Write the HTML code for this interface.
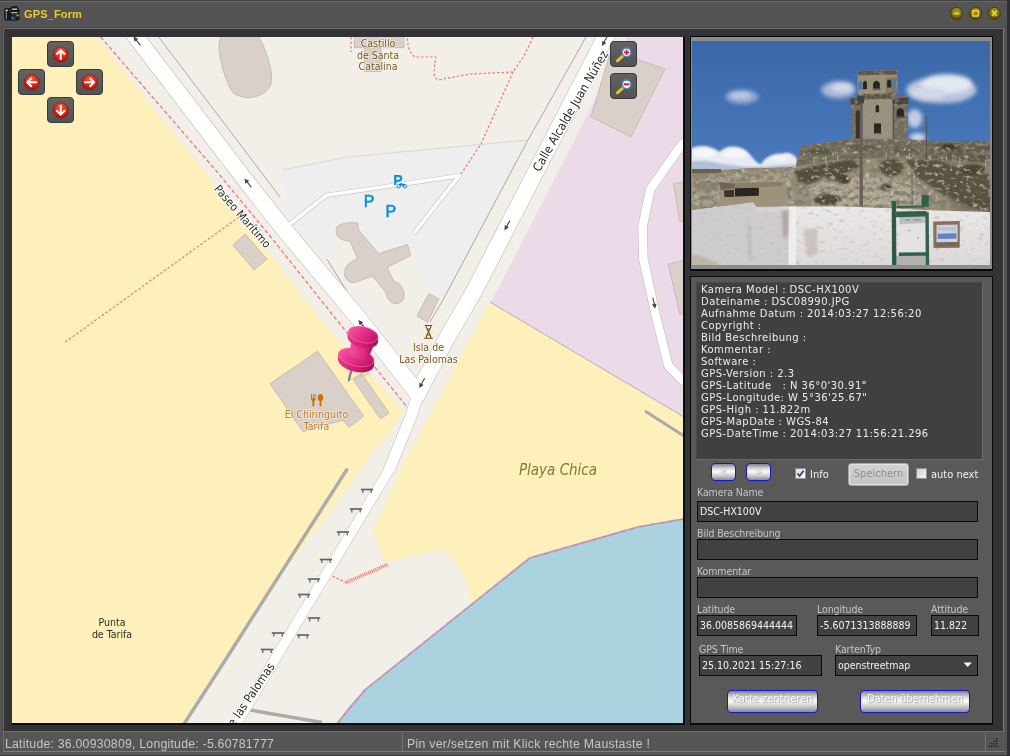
<!DOCTYPE html>
<html lang="de">
<head>
<meta charset="utf-8">
<title>GPS_Form</title>
<style>
html,body{margin:0;padding:0;}
body{width:1010px;height:756px;overflow:hidden;background:#545454;position:relative;
 font-family:"Liberation Sans","DejaVu Sans",sans-serif;font-size:11px;color:#e6e6e6;}
.abs{position:absolute;}
.lbl,.inp,.bbtn,.wt,#info,#title,#st1,#st2,#spbtn,#map{will-change:transform;}
#win{position:absolute;left:0;top:0;width:1010px;height:756px;overflow:hidden;background:#545454;}
#title{position:absolute;left:24.3px;top:7px;font-weight:bold;font-size:11px;color:#e9c93f;letter-spacing:0.15px;line-height:14px;white-space:nowrap;text-shadow:0 0 1px #6b5a10;}
#frame{position:absolute;left:3px;top:28px;width:999px;height:702px;background:#333335;
 border-top:1px solid #6e6e6e;border-left:1px solid #6a6a6a;border-right:1px solid #7a7a7a;border-bottom:1px solid #707070;box-sizing:content-box;}
#mapbox{position:absolute;left:12px;top:37px;width:671px;height:686px;overflow:hidden;background:#f2efe9;}
#mapshadow{position:absolute;left:12px;top:37px;width:673px;height:688px;background:#0c0c0c;}
.lbl{position:absolute;color:#c4c4c4;font-family:"DejaVu Sans Condensed","Liberation Sans",sans-serif;font-size:10.5px;line-height:13px;white-space:nowrap;letter-spacing:-0.1px;}
.inp{position:absolute;box-sizing:border-box;border:1px solid #0a0a0a;background:#414141;color:#f2f2f2;font-family:"DejaVu Sans Condensed","Liberation Sans",sans-serif;font-size:10.5px;line-height:18px;height:21px;padding-left:2px;white-space:nowrap;overflow:hidden;}
.bbtn{position:absolute;box-sizing:border-box;border:1.5px solid #1616c8;border-radius:4px;
 background:linear-gradient(#80808e 0%,#dedede 30%,#fcfcfc 48%,#cbcbcb 74%,#8a8a8a 100%);color:#fff;text-align:center;font-family:"DejaVu Sans Condensed","Liberation Sans",sans-serif;white-space:nowrap;overflow:hidden;
 text-shadow:0 0 2px #9a9a9a,1px 1px 1px #b0b0b0;}
#status{position:absolute;left:3px;top:732px;width:1001px;height:19px;background:#565656;border-bottom:1px solid #7c7c7c;border-left:1px solid #6a6a6a;color:#c6c6c6;font-size:12.3px;line-height:17px;white-space:nowrap;}
</style>
</head>
<body>
<div id="win">
 <!-- title bar -->
 <svg class="abs" style="left:2px;top:2px" width="24" height="22" viewBox="2 2 24 22">
  <defs><filter id="ib" x="-10%" y="-10%" width="120%" height="120%"><feGaussianBlur stdDeviation="0.35"/></filter></defs>
  <g filter="url(#ib)">
  <path d="M4.200 9.200 Q4.200 8.300 5.200 8.300 L10.500 8.300 L11.300 6.600 Q11.600 6.200 12.200 6.200 L16.600 6.200 Q17.300 6.200 17.600 6.800 L18.300 8.400 Q19.500 8.600 19.500 9.800 L19.500 18.600 Q19.500 20.400 17.800 20.400 L6 20.400 Q4.200 20.400 4.200 18.600 Z" fill="#151515"/>
  <rect x="5.700" y="10" width="1.300" height="9" fill="#7d7d7d"/>
  <rect x="5.500" y="9.700" width="2.500" height="1.100" fill="#e8e8e8"/>
  <rect x="9" y="9.900" width="1.800" height="0.900" fill="#5a5a5a"/>
  <rect x="11.900" y="8.500" width="5.200" height="1.300" fill="#d8d2d2"/>
  <rect x="11" y="12" width="6.700" height="1.200" fill="#a8a8ae"/>
  <rect x="11.500" y="13.600" width="4.500" height="0.700" fill="#5d5d5d"/>
  <circle cx="13.600" cy="17.500" r="3" fill="#12354c"/>
  <ellipse cx="12.800" cy="18.100" rx="1.100" ry="0.700" fill="#7aa6c2" transform="rotate(25 12.800 18.100)"/>
  <path d="M15.800 14.600 L19.200 14.400 L19.200 16.300 L16.800 16.600 Z" fill="#c58a2a"/>
  </g>
 </svg>
 <div id="title">GPS_Form</div>
 <svg class="abs" style="left:946px;top:5px" width="58" height="18" viewBox="946 5 58 18">
  <defs>
   <radialGradient id="yb" cx="0.5" cy="0.35" r="0.65">
    <stop offset="0" stop-color="#a89a1c"/><stop offset="0.6" stop-color="#83760f"/><stop offset="1" stop-color="#4a4206"/>
   </radialGradient>
  </defs>
  <g stroke="#3a3405" stroke-width="0.8" fill="url(#yb)">
   <circle cx="956.5" cy="13.3" r="6"/><circle cx="975.6" cy="13.3" r="6"/><circle cx="994.4" cy="13.3" r="6"/>
  </g>
  <rect x="953.6" y="12.6" width="5.8" height="1.8" fill="#ecd838"/>
  <rect x="972.9" y="10.6" width="5.4" height="5.4" fill="none" stroke="#ecd838" stroke-width="1.4"/>
  <path d="M992.2 10.9 L996.6 15.7 M996.6 10.9 L992.2 15.7" stroke="#ecd838" stroke-width="1.7" fill="none"/>
 </svg>

 <div id="frame"></div>
 <div id="mapshadow"></div>
 <div id="mapbox">
  <svg id="map" class="abs" style="left:-12px;top:-37px" width="1010" height="756" viewBox="0 0 1010 756">
  <defs>
 <radialGradient id="redb" cx="0.5" cy="0.3" r="0.75">
  <stop offset="0" stop-color="#ff5a3a"/><stop offset="0.55" stop-color="#e32210"/><stop offset="1" stop-color="#a80e04"/>
 </radialGradient>
 <linearGradient id="btnbg" x1="0" y1="0" x2="0" y2="1">
  <stop offset="0" stop-color="#636363"/><stop offset="1" stop-color="#525252"/>
 </linearGradient>
 <linearGradient id="pinA" x1="0" y1="0" x2="1" y2="0.3">
  <stop offset="0" stop-color="#f45fa4"/><stop offset="0.55" stop-color="#e8318a"/><stop offset="1" stop-color="#c0176a"/>
 </linearGradient>
 <linearGradient id="pinRim" x1="0" y1="0" x2="1" y2="0">
  <stop offset="0" stop-color="#e63c8b"/><stop offset="0.5" stop-color="#d61f74"/><stop offset="1" stop-color="#a50d55"/>
 </linearGradient>
 <linearGradient id="pinB" x1="0" y1="0" x2="1" y2="0">
  <stop offset="0" stop-color="#f0509a"/><stop offset="0.6" stop-color="#e12a82"/><stop offset="1" stop-color="#a80f58"/>
 </linearGradient>
 <g id="bench">
  <path d="M-6.200 0 H6.200" stroke="#666666" stroke-width="1.700" fill="none"/><path d="M-4.200 0.500 V3.600 M4.200 0.500 V3.600" stroke="#666666" stroke-width="1.300" fill="none"/>
 </g>
 <g id="arrow">
  <path d="M5.500 0 L-2 0" stroke="#454545" stroke-width="1.100" fill="none"/><path d="M-5.800 0 L-1 -2.400 L-1 2.400 Z" fill="#454545"/>
 </g>
</defs>
<rect x="0" y="0" width="1010" height="756" fill="#f2efe9"/>

<!-- beaches -->
<path d="M12 37 L97 37 L270 254 L320 319 L400 407 L401.500 414 L386 437.500 L373.500 450 L358.900 472.500 L274.600 584.800 L257 610 L226 659 L184 724 L12 724 Z" fill="#fef0ba"/>
<path d="M490 302 L684 417 L684 519 L638 527 L530 558 L471 605 L470 598 L466 579 L455 562 L443 550 L385 562 L379 546 L373 530 L400 470 L444 388 Z" fill="#fef0ba"/>
<!-- industrial -->
<path d="M627 37 L684 37 L684 417 L490 302 L498 289 Z" fill="#ebdbe8"/>
<path d="M490 302 L684 417" stroke="#b5a4b2" stroke-width="0.9" fill="none"/>
<!-- water -->
<path d="M684 519 L638 527 L530 558 L471 605 L365 690 L348 710 L337 724 L684 724 Z" fill="#aad3df"/>
<path d="M684 519 L638 527 L530 558 L471 605 L365 690 L348 710 L337 724" stroke="#c9a3c3" stroke-width="2.200" fill="none"/>
<path d="M684 519 L638 527 L530 558 L471 605 L365 690 L348 710 L337 724" stroke="#9b8ba3" stroke-width="0.800" stroke-dasharray="5 2 1 2" fill="none"/>

<!-- parking -->
<path d="M282 170 L348 157 L528 140 L443 300 L430 294 L411 250 L380 250 L358 225 L337 226 L336 240 L327 259 L293 224 Z" fill="#eeeeee"/>
<path d="M282 170 L348 157 L528 140" stroke="#d3d0ca" stroke-width="0.8" fill="none"/>

<!-- buildings -->
<g fill="#d9d0c9" stroke="#c1b4a8" stroke-width="0.800">
 <path d="M221.400 36 L258.500 36 C264 45 270 62 271.400 72.700 C272 80 271 86 269 88.200 C263 95 254 98 247.600 97.700 C241 97 235 95 232.100 91.800 C226 82 220 62 219 48.900 C218.500 44 219.500 39 221.400 36 Z"/>
 <path d="M354.500 36 H404 V47.700 H354.500 Z"/>
 <path d="M364.300 47.700 H381 V71.500 H364.300 Z"/>
 <path d="M611 50 L665 69 L631 137 L591 117 Z"/>
 <path d="M673.600 183.600 L684 181.600 L684 221 L679.700 221 Z"/>
 <path d="M668.300 264 L684 260.400 L684 314 L679.700 314 Z"/>
 <path d="M245 234 L267 259 L254 270 L233 245 Z"/>
 <path d="M337 227 C339 223 352 222 357.500 223 L358.700 230 L378.700 253.700 L407.500 244.500 L410.700 255.500 L387 267.500 L393.700 281 C398 283 401 284 402 288 C405 292 404.500 296 403.700 298.700 C402 302 399 304 396 303.500 C393 303.500 391 302.500 390 301 C387 298 386.500 295 386 292.500 L372.500 276 L355 282.500 C351 283 349 282 347.500 280 C344 277 344 273 345 270 C346 266 348 264 350 262.500 L357.500 258.700 L350 241 C346 241 341 240 338.700 237.500 C336 234 335.500 230 337 227 Z"/>
 <path d="M428.700 293.700 L439 298.700 L427.500 322.500 L417 316 Z"/>
 <path d="M270 383.700 L317.500 351.200 L363.700 416.200 L348.700 427.500 L343 420 L303 431.700 Z"/>
 <path d="M353 379.500 L361.700 373.700 L389 413 L380.500 419 Z"/>
</g>

<!-- thin lines (walls / barriers) -->
<g stroke="#8d8b86" stroke-width="0.7" fill="none">
 <path d="M158.700 37 L280 197"/>
 <path d="M327 259 L349 295 L362 314"/>
 <path d="M586 37 L528 140 L443 300 L430 322"/>
</g>
<!-- gray thick walls -->
<g stroke="#ababab" stroke-width="3" fill="none" stroke-linecap="butt">
 <path d="M347.500 468.500 L226 659 L184 724" stroke-width="3.400"/>
 <path d="M645 411 L684 436"/>
 <path d="M247.600 709.600 L322 722.500" stroke-width="3.400"/>
</g>

<!-- road casings -->
<g stroke="#c9c5bd" fill="none" stroke-linejoin="round" stroke-linecap="round">
 <path d="M130.700 30 L136 37 L247.500 183 L284.600 230 L360 320 L418 394" stroke-width="17.400"/>
 <path d="M609 30 L475.300 289 L445.800 340 L418 393" stroke-width="17.400"/>
 <path d="M418 393 L411.500 415 L389 470" stroke-width="12.400"/><path d="M389 470 L275 659 L230 735" stroke-width="10.800"/>
 <path d="M290.500 223.500 L326.500 195.300 L459 175.800 L415 232" stroke-width="4.800"/>
 <path d="M690 137 L680.800 146 L650.400 189 L642.600 226.400 L643.300 258.600 L655.800 315.700 L668.300 365.700 L682.600 380 L692 388" stroke-width="9.800"/>
</g>
<!-- road fills -->
<g stroke="#ffffff" fill="none" stroke-linejoin="round" stroke-linecap="round">
 <path d="M130.700 30 L136 37 L247.500 183 L284.600 230 L360 320 L418 394" stroke-width="16"/>
 <path d="M609 30 L475.300 289 L445.800 340 L418 393" stroke-width="16"/>
 <path d="M418 393 L411.500 415 L389 470" stroke-width="11.200"/><path d="M389 470 L275 659 L230 735" stroke-width="9.600"/>
 <path d="M290.500 223.500 L326.500 195.300 L459 175.800 L415 232" stroke-width="3.600"/>
 <path d="M690 137 L680.800 146 L650.400 189 L642.600 226.400 L643.300 258.600 L655.800 315.700 L668.300 365.700 L682.600 380 L692 388" stroke-width="8.400"/>
</g>

<!-- footways (red dashed) -->
<g stroke="#ef747a" stroke-width="1.300" fill="none" stroke-dasharray="4 2.500">
 <path d="M100.700 37 L215.500 170 L270 236 L336.700 320 L407.500 407.500"/>
</g>
<g stroke="#ef747a" stroke-width="1.200" fill="none" stroke-dasharray="2.500 2">
 <path d="M239 217 L64 343"/>
 <path d="M533 37 L524 56 L513 72 L481 144 L461 174"/>
 <path d="M513 72 L470 74 L438 80 C432 77 434 70 436 57 L415 57 C408 52 408 44 407 37"/>
 <path d="M351 37 L351 52"/>
 <path d="M332.500 576 L346 582.500"/>
</g>
<path d="M346 582.500 L387.500 564.500" stroke="#f57f73" stroke-width="3.600" stroke-dasharray="1.100 0.900" fill="none"/>

<!-- benches -->
<g>
 <use href="#bench" x="367" y="489.500"/><use href="#bench" x="356" y="509"/><use href="#bench" x="343" y="532"/>
 <use href="#bench" x="326" y="559.500"/><use href="#bench" x="314" y="579"/><use href="#bench" x="304" y="594.500"/>
 <use href="#bench" x="314" y="618"/><use href="#bench" x="278" y="633"/><use href="#bench" x="303" y="635"/><use href="#bench" x="267" y="649.500"/>
</g>

<!-- oneway arrows -->
<use href="#arrow" transform="translate(137,41) rotate(52)"/>
<use href="#arrow" transform="translate(248,183) rotate(52)"/>
<use href="#arrow" transform="translate(362,324.500) rotate(52)"/>
<use href="#arrow" transform="translate(604.700,41) rotate(-62)"/>
<use href="#arrow" transform="translate(507.300,225.300) rotate(-62)"/>
<use href="#arrow" transform="translate(422,383) rotate(-62)"/>
<use href="#arrow" transform="translate(654,303) rotate(-102)"/>

<!-- labels -->
<g font-family="'DejaVu Sans Condensed','DejaVu Sans','Liberation Sans',sans-serif" text-anchor="middle">
 <g font-size="10.500" fill="#7a551a" stroke="#ffffff" stroke-opacity="0.6" stroke-width="1.500" paint-order="stroke" style="paint-order:stroke">
  <text x="378" y="47">Castillo</text><text x="378" y="58.500">de Santa</text><text x="378" y="70">Catalina</text>
  <text x="428.500" y="350.500">Isla de</text><text x="428.500" y="362.500">Las Palomas</text>
 </g>
 <g font-size="10.500" fill="#c07a1e" stroke="#ffffff" stroke-opacity="0.6" stroke-width="1.300" style="paint-order:stroke">
  <text x="316.500" y="418">El Chiringuito</text><text x="316.500" y="430">Tarifa</text>
 </g>
 <g font-size="10.500" fill="#2c2c2c">
  <text x="112" y="625.500">Punta</text><text x="112" y="637.500">de Tarifa</text>
 </g>
 <text x="558" y="475" font-size="15" font-style="italic" fill="#85763a" font-family="'DejaVu Sans Condensed','DejaVu Sans',sans-serif">Playa Chica</text>
 <g font-size="12" fill="#2a2a2a" stroke="#ffffff" stroke-width="2" style="paint-order:stroke">
  <text transform="translate(242.600,216.400) rotate(49)" x="0" y="4" font-size="11.500">Paseo Marítimo</text>
  <text transform="translate(570.600,111) rotate(-59.800)" x="0" y="4" font-size="12.300">Calle Alcalde Juan Núñez</text>
  <text transform="translate(245.500,703) rotate(-56)" x="0" y="4">Calle las Palomas</text>
 </g>
 <g font-family="'Liberation Sans','DejaVu Sans',sans-serif" font-size="16" fill="#0a8fd6" stroke="#0a8fd6" stroke-width="0.500" text-anchor="start">
  <text x="393.300" y="184.800" font-size="14" font-weight="bold" stroke-width="0.200">P</text><text x="363.800" y="206.700">P</text><text x="385.600" y="216.600">P</text>
 </g>
</g>
<!-- motorcycle parking mark -->
<g stroke="#0a7fc6" stroke-width="0.900" fill="none"><circle cx="398.700" cy="186.300" r="1.700"/><circle cx="404.900" cy="186.300" r="1.700"/><path d="M399 184.600 L405 184.600 M400.500 183.300 L403.500 185.500" stroke-width="1.600"/></g>
<!-- restaurant icon -->
<g fill="#c77400">
 <path d="M312 394 v4.500 h0.900 v-4.500 h0.900 v4.500 h0.900 v-4.500 h0.900 v5.200 c0 1 -0.800 1.500 -1.300 1.700 v5.400 h-1.900 v-5.400 c-0.500 -0.200 -1.300 -0.700 -1.300 -1.700 v-5.200 z"/>
 <path d="M320.500 394 c1.800 0 2.800 1.800 2.800 3.800 c0 1.900 -0.900 3 -1.900 3.300 v5.200 h-1.800 v-5.200 c-1 -0.300 -1.900 -1.400 -1.900 -3.300 c0 -2 1 -3.800 2.800 -3.800 z"/>
</g>
<!-- monument icon -->
<g stroke="#734a08" stroke-width="1.100" fill="none">
 <path d="M424.800 325.500 H432.200 M424.200 338.200 H432.800 M426 326 C426.500 330 430.500 333.500 431 338 M431 326 C430.500 330 426.500 333.500 426 338 M426.500 329 H430.500 M426.500 335 H430.500"/>
</g>

<!-- map nav buttons -->
<g>
 <g stroke="#3a3a3a" stroke-width="1" fill="url(#btnbg)">
  <rect x="47.500" y="41.500" width="26" height="25" rx="3.500"/>
  <rect x="18.500" y="69.500" width="26" height="25" rx="3.500"/>
  <rect x="76.500" y="69.500" width="26" height="25" rx="3.500"/>
  <rect x="47.500" y="97.500" width="26" height="25" rx="3.500"/>
  <rect x="610.500" y="41.500" width="26" height="25" rx="3.500"/>
  <rect x="610.500" y="73.500" width="26" height="25" rx="3.500"/>
 </g>
 <g fill="url(#redb)" stroke="#8a1206" stroke-width="0.600">
  <circle cx="60.700" cy="54.500" r="7.600"/><circle cx="31.700" cy="82.300" r="7.600"/><circle cx="89.700" cy="82.300" r="7.600"/><circle cx="60.700" cy="110.300" r="7.600"/>
 </g>
 <g stroke="#ffffff" stroke-width="2" fill="none" stroke-linecap="square" stroke-linejoin="miter">
  <path d="M60.700 59 V50.500 M57 53.800 L60.700 50.200 L64.400 53.800"/>
  <path d="M36.200 82.300 H27.700 M31 78.600 L27.400 82.300 L31 86"/>
  <path d="M85.200 82.300 H93.700 M90.400 78.600 L94 82.300 L90.400 86"/>
  <path d="M60.700 105.800 V114.300 M57 111 L60.700 114.600 L64.400 111"/>
 </g>
 <!-- magnifiers -->
 <g>
  <path d="M622.300 56.400 L617.300 60.900" stroke="#f2bd2c" stroke-width="2.800" stroke-linecap="round"/>
  <circle cx="626.600" cy="52.300" r="4.300" fill="#f4f8ff" stroke="#4c8ed0" stroke-width="1.300"/>
  <path d="M624 52.300 H629.200 M626.600 49.700 V54.900" stroke="#d8201a" stroke-width="1.800"/>
  <path d="M622.300 88.400 L617.300 92.900" stroke="#f2bd2c" stroke-width="2.800" stroke-linecap="round"/>
  <circle cx="626.600" cy="84.300" r="4.300" fill="#f4f8ff" stroke="#4c8ed0" stroke-width="1.300"/>
  <path d="M623.800 84.300 H629.400" stroke="#d8201a" stroke-width="2"/>
 </g>
</g>

<!-- pin -->
<g>
 <path d="M351.300 370 L348.900 380.200" stroke="#76858a" stroke-width="2.300" stroke-linecap="round"/>
 <path d="M350.500 379.500 L362 371.500 L372 374 Z" fill="#c9c2ad" opacity="0.500"/>
 <!-- base -->
 <ellipse cx="356" cy="362" rx="18.400" ry="9.800" transform="rotate(13 356 362)" fill="url(#pinRim)"/>
 <path d="M338.100 353.500 L338 358.500 L374 366.500 L374.200 361.500 Z" fill="url(#pinRim)"/>
 <ellipse cx="356.200" cy="357.400" rx="18.400" ry="9" transform="rotate(13 356.200 357.400)" fill="url(#pinA)"/>
 <ellipse cx="356.200" cy="357.400" rx="18" ry="8.600" transform="rotate(13 356.200 357.400)" fill="none" stroke="#ff86bd" stroke-width="0.700" opacity="0.700"/>
 <!-- neck -->
 <path d="M351 342.500 L349.300 354 C353 359 364 361 368.500 358 L373.800 345 Z" fill="url(#pinB)"/>
 <!-- head -->
 <ellipse cx="362.800" cy="339" rx="15.500" ry="8.600" transform="rotate(13 362.800 339)" fill="url(#pinRim)"/>
 <path d="M347.700 331.500 L347.600 335.500 L378 342.500 L378.100 338.400 Z" fill="url(#pinRim)"/>
 <ellipse cx="363.100" cy="334.800" rx="15.500" ry="8.300" transform="rotate(13 363.100 334.800)" fill="url(#pinA)"/>
 <ellipse cx="363.100" cy="334.800" rx="15.100" ry="7.900" transform="rotate(13 363.100 334.800)" fill="none" stroke="#ff86bd" stroke-width="0.700" opacity="0.600"/>
</g>

  </svg>
 </div>

 <!-- photo panel -->
 <div class="abs" style="left:690px;top:36px;width:303px;height:235px;background:#0a0a0a;"></div>
 <div class="abs" style="left:691px;top:37px;width:301px;height:232px;background:#8c8c8c;"></div>
 <div class="abs" style="left:692px;top:41px;width:298px;height:224px;overflow:hidden;background:#4a78b8;">
  <svg id="photo" class="abs" style="left:-4px;top:-7px" width="306" height="238" viewBox="0 0 972 756" preserveAspectRatio="none">
  <defs>
 <linearGradient id="sky" x1="0" y1="0" x2="0" y2="1">
  <stop offset="0" stop-color="#3a66a6"/><stop offset="0.5" stop-color="#4878bb"/><stop offset="1" stop-color="#6294d4"/>
 </linearGradient>
 <linearGradient id="wallg" x1="0" y1="0" x2="0" y2="1">
  <stop offset="0" stop-color="#ebe8e8"/><stop offset="1" stop-color="#dcd8d8"/>
 </linearGradient>
 <filter id="blur6" x="-20%" y="-20%" width="140%" height="140%"><feGaussianBlur stdDeviation="6"/></filter>
 <filter id="blur4" x="-20%" y="-20%" width="140%" height="140%"><feGaussianBlur stdDeviation="4"/></filter>
 <filter id="blur2" x="-20%" y="-20%" width="140%" height="140%"><feGaussianBlur stdDeviation="2"/></filter>
 <filter id="blur1" x="-10%" y="-10%" width="120%" height="120%"><feGaussianBlur stdDeviation="1.2"/></filter>
 <filter id="blur10" x="-20%" y="-20%" width="140%" height="140%"><feGaussianBlur stdDeviation="9"/></filter>
 <filter id="speck" x="0" y="0" width="100%" height="100%">
  <feTurbulence type="fractalNoise" baseFrequency="0.055 0.07" numOctaves="3" seed="11" result="n"/>
  <feColorMatrix in="n" type="matrix" values="0 0 0 0 0.22  0 0 0 0 0.20  0 0 0 0 0.15  3.2 0 0 0 -1.30" result="d"/>
  <feComposite in="d" in2="SourceGraphic" operator="in" result="dd"/>
  <feColorMatrix in="n" type="matrix" values="0 0 0 0 0.72  0 0 0 0 0.69  0 0 0 0 0.60  0 2.4 0 0 -1.48" result="l"/>
  <feComposite in="l" in2="SourceGraphic" operator="in" result="ll"/>
  <feMerge><feMergeNode in="SourceGraphic"/><feMergeNode in="dd"/><feMergeNode in="ll"/></feMerge>
 </filter>
 <filter id="dspeck" x="0" y="0" width="100%" height="100%">
  <feTurbulence type="fractalNoise" baseFrequency="0.06 0.08" numOctaves="3" seed="23" result="n"/>
  <feColorMatrix in="n" type="matrix" values="0 0 0 0 0.64  0 0 0 0 0.60  0 0 0 0 0.50  0 2.6 0 0 -1.45" result="l"/>
  <feComposite in="l" in2="SourceGraphic" operator="in" result="ll"/>
  <feMerge><feMergeNode in="SourceGraphic"/><feMergeNode in="ll"/></feMerge>
 </filter>
 <filter id="wspeck" x="0" y="0" width="100%" height="100%">
  <feTurbulence type="fractalNoise" baseFrequency="0.05 0.09" numOctaves="3" seed="3" result="n"/>
  <feColorMatrix in="n" type="matrix" values="0 0 0 0 0.55  0 0 0 0 0.52  0 0 0 0 0.5  3.0 0 0 0 -1.75" result="d"/>
  <feComposite in="d" in2="SourceGraphic" operator="in" result="dd"/>
  <feMerge><feMergeNode in="SourceGraphic"/><feMergeNode in="dd"/></feMerge>
 </filter>
 <filter id="tspeck" x="0" y="0" width="100%" height="100%">
  <feTurbulence type="fractalNoise" baseFrequency="0.07 0.06" numOctaves="2" seed="5" result="n"/>
  <feColorMatrix in="n" type="matrix" values="0 0 0 0 0.3  0 0 0 0 0.27  0 0 0 0 0.22  2.6 0 0 0 -1.25" result="d"/>
  <feComposite in="d" in2="SourceGraphic" operator="in" result="dd"/>
  <feMerge><feMergeNode in="SourceGraphic"/><feMergeNode in="dd"/></feMerge>
 </filter>
</defs>
<rect x="0" y="0" width="972" height="756" fill="url(#sky)"/>
<!-- clouds -->
<g filter="url(#blur6)">
 <ellipse cx="172" cy="200" rx="52" ry="22" fill="#8fa7d0"/>
 <ellipse cx="166" cy="194" rx="36" ry="13" fill="#b9c7e0"/>
 <ellipse cx="478" cy="178" rx="54" ry="27" fill="#a9b9d8"/>
 <ellipse cx="490" cy="168" rx="36" ry="17" fill="#d2d9e9"/>
 <ellipse cx="805" cy="178" rx="112" ry="42" fill="#bac5dc"/>
 <ellipse cx="822" cy="158" rx="82" ry="30" fill="#e3e7f0"/>
 <ellipse cx="760" cy="190" rx="58" ry="22" fill="#d0d7e7"/>
 <ellipse cx="720" cy="268" rx="24" ry="30" fill="#c3cde1"/>
 <ellipse cx="730" cy="328" rx="26" ry="13" fill="#d2d9e9"/>
</g>
<g filter="url(#blur4)">
 <path d="M0 440 L0 368 C30 350 70 352 100 374 C125 350 172 350 198 384 C212 402 222 412 232 414 C244 392 272 378 298 380 C322 372 340 384 346 398 L350 440 Z" fill="#e6eaf2"/>
 <path d="M0 440 L0 408 C40 396 80 408 120 414 C160 420 200 424 240 422 C280 416 320 412 350 416 L350 440 Z" fill="#b4c0d6"/>
 <ellipse cx="150" cy="380" rx="40" ry="15" fill="#f5f6f9"/>
 <ellipse cx="52" cy="378" rx="36" ry="15" fill="#f5f6f9"/>
 <ellipse cx="290" cy="394" rx="30" ry="10" fill="#f0f2f7"/>
</g>

<!-- hill -->
<g filter="url(#speck)">
 <path d="M0 432 L60 428 L110 432 L200 426 L300 424 L343 421 L350 386 L360 357 L400 350 L441 344 L489 337 L520 335 L700 335 L760 339 L800 342 L860 340 L972 340 L972 580 L0 580 Z" fill="#978e78"/>
 <path d="M343 421 L350 386 L360 357 L400 350 L441 344 L489 337 L520 335 L700 335 L760 339 L800 342 L860 340 L972 340 L972 410 L860 402 L760 396 L600 394 L480 398 L400 410 Z" fill="#6f6755"/>
 <g filter="url(#blur6)">
  <path d="M10 450 L330 436 L340 545 L10 550 Z" fill="#a59d88"/>
  <path d="M395 472 L560 448 L700 464 L760 545 L560 552 L395 548 Z" fill="#b0a893"/>
  <path d="M760 352 L972 346 L972 410 L800 402 Z" fill="#5f5847"/>
  <path d="M820 520 L972 500 L972 575 L860 570 Z" fill="#7a735f"/>
  <ellipse cx="60" cy="480" rx="40" ry="20" fill="#8c8470"/>
 </g>
</g>
<g filter="url(#dspeck)">
 <g filter="url(#blur4)" opacity="0.920">
  <path d="M336 436 L420 414 L524 398 L548 420 L504 440 L474 470 L432 452 L384 480 L350 466 Z" fill="#4d4937"/>
  <ellipse cx="497" cy="462" rx="19" ry="16" fill="#423e2f"/>
  <ellipse cx="646" cy="424" rx="38" ry="28" fill="#514c39"/>
  <ellipse cx="630" cy="486" rx="17" ry="12" fill="#474333"/>
  <path d="M690 398 L790 400 L880 430 L972 450 L972 566 L900 552 L810 510 L730 456 Z" fill="#544f3b"/>
  <ellipse cx="442" cy="526" rx="42" ry="18" fill="#484434"/>
  <ellipse cx="905" cy="430" rx="40" ry="17" fill="#454131"/>
  <ellipse cx="832" cy="358" rx="30" ry="10" fill="#3b372a"/>
  <ellipse cx="420" cy="372" rx="40" ry="10" fill="#5a5343"/>
  <ellipse cx="560" cy="360" rx="60" ry="8" fill="#5e5747"/>
  <ellipse cx="690" cy="368" rx="40" ry="8" fill="#5e5747"/>
 </g>
</g>
<!-- fence posts on ridge -->
<g fill="#b9b3a2">
 <rect x="398" y="392" width="3" height="18"/><rect x="436" y="388" width="3" height="18"/><rect x="474" y="384" width="3" height="18"/>
 <rect x="628" y="376" width="3" height="16"/><rect x="666" y="376" width="3" height="16"/><rect x="702" y="378" width="3" height="16"/>
 <rect x="820" y="386" width="3" height="16"/><rect x="862" y="392" width="3" height="18"/><rect x="944" y="400" width="3" height="18"/>
</g>
<!-- left flat structure -->
<path d="M0 429 L104 429 L108 440 L60 443 L0 443 Z" fill="#6a6050"/>
<path d="M0 443 L62 443 L64 458 L0 460 Z" fill="#91866d"/>
<!-- bunker -->
<g filter="url(#blur1)">
 <path d="M108 472 L312 468 L315 549 L100 552 L102 500 Z" fill="#9f927a"/>
 <path d="M104 476 L300 469 L300 484 L108 492 Z" fill="#8b7f69"/>
 <path d="M149 490 L225 488 L225 514 L149 516 Z" fill="#2a2721"/>
 <path d="M114 497 L146 495 L146 518 L116 518 Z" fill="#38342b"/>
 <path d="M100 470 L150 476 L146 490 L104 496 Z" fill="#6e6555"/>
</g>

<!-- tower -->
<g filter="url(#tspeck)">
 <path d="M538 118 L664.700 114.700 L665.500 189.600 L650.500 196.800 L554 200.300 L539.800 189.600 Z" fill="#989079"/>
 <path d="M554 196 L650.500 194 L650.500 333 L554 333 Z" fill="#9a927b"/>
 <path d="M516.700 202 L554 200.300 L554 333 L520 334 Z" fill="#746c5b"/>
 <path d="M650.500 198.600 L698.700 196.800 L698.700 333 L650.500 333 Z" fill="#746c5b"/>
 <path d="M628 140 L665 138 L665.500 190 L630 192 Z" fill="#7d7563"/>
 <path d="M539.800 118.300 L664 115 L664 129 L539.800 131 Z" fill="#5e5342"/>
 <path d="M554 189 L650 188 L650 206 L554 208 Z" fill="#5d5547"/>
 <path d="M515 206 L556 203 L556 224 L516.700 227 Z" fill="#4f473a"/>
 <path d="M649 205 L700 202 L700 222 L650 224 Z" fill="#4c4438"/>
 <path d="M540 176 L628 174 L628 189 L540 190 Z" fill="#9a927c"/>
</g>
<g filter="url(#blur1)">
 <!-- sky through arches -->
 <path d="M541.600 176 L541.600 156 C543 146 552 146 554 156 L554 176 Z" fill="#4a7abc"/>
 <path d="M650.500 168 L650.500 150 C652 142 659 142 661 150 L661 168 Z" fill="#4a7abc"/>
 <g fill="#2a2620">
  <path d="M556 175.400 L556 156 C558 146 566.500 146 568.400 156 L568.400 175.400 Z"/>
  <path d="M588 173.600 L588 158 C591 145 606 145 609.400 158 L609.400 173.600 Z"/>
  <path d="M632.600 170 L632.600 152 C634 142 643 142 645 152 L645 170 Z"/>
  <path d="M596 248.500 L596 232 C598 222 605 222 607 232 L607 248.500 Z"/>
  <path d="M663 263 L663 246 C666 232 683 232 686 246 L686 263 Z"/>
  <path d="M591 284 L613 284 L613 314.500 L591 314.500 Z"/>
  <path d="M532.700 332 L532.700 252 C535 238 545 238 547 252 L547 332 Z" fill="#39342b"/>
  <path d="M650.500 224 L654 224 L654 333 L650.500 333 Z" fill="#544c40"/>
 </g>
 <path d="M586 173.600 L612 173 L612 178 L586 178.600 Z" fill="#6a6252"/>
 <path d="M588 314.500 L616 314.500 L616 319 L588 319 Z" fill="#7a7261"/>
 <path d="M660 263 L690 262.500 L690 267 L660 267.500 Z" fill="#5f574a"/>
</g>
<!-- poles -->
<path d="M546 218 L554 218 L556 548 L545 548 Z" fill="#6b5d57"/>
<path d="M538 196 L562 196 L558 220 L542 220 Z" fill="#46413c"/>
<path d="M755.500 262 L759.500 262 L759.500 400 L755.500 400 Z" fill="#5a5650"/>
<path d="M710 440 L713 440 L714 545 L710 545 Z" fill="#6b6a60"/>

<!-- wall -->
<g filter="url(#wspeck)">
 <path d="M0 561 L128.600 545.400 L192.400 536.700 L206.900 535.600 L218.500 551.200 L320 548.300 L489 548.300 L640 553.600 L760 560 L972 566 L972 756 L0 756 Z" fill="url(#wallg)"/>
 <path d="M0 561 L128.600 545.400 L192.400 536.700 L206.900 535.600 L218.500 551.200 L320 548.300 L320 740 L0 740 Z" fill="#cfccd0"/>
</g>
<path d="M320 548.300 L343 548.300 L343 740 L320 740 Z" fill="#f1efef" opacity="0.850"/>
<g filter="url(#blur4)" opacity="0.700">
 <path d="M297 560 L320 558 L318 640 L302 648 Z" fill="#a89b8c"/>
 <path d="M366 620 L410 616 L413 700 L378 706 Z" fill="#c2bab1"/>
 <path d="M190 600 L200 600 L204 720 L192 720 Z" fill="#bab6b6"/>
 <path d="M0 699 L40 703 L99.600 731 L99.600 756 L0 756 Z" fill="#b9ad97"/>
 <path d="M218 552 L320 549 L320 560 L218 563 Z" fill="#dddadc"/>
</g>
<!-- sign board -->
<path d="M671.400 566 L756 566 L756 694.400 L671.400 694.400 Z" fill="#e3e1e1"/>
<path d="M671.400 580 L756 580 L756 600 L671.400 604 Z" fill="#bdbcc0"/>
<path d="M660.900 705 L754.200 705 L754.200 736 L660.900 736 Z" fill="#b3b0ad"/>
<g fill="#31614a">
 <path d="M646.800 530.700 L660.900 530.700 L662 736 L648 736 Z"/>
 <path d="M754.200 566 L764.700 566 L766 736 L755 736 Z"/>
 <path d="M660.900 564.200 L757.700 562 L757.700 580 L660.900 582 Z"/>
 <path d="M741.800 511.300 L764.700 511.300 L764.700 548.300 L741.800 548.300 Z"/>
 <path d="M669.700 694.400 L757.700 693 L757.700 704 L669.700 705 Z"/>
 <path d="M662.600 546.500 L750.600 544.500 L750.600 551 L662.600 552.500 Z"/>
</g>
<path d="M652 532 L657 532 L658 736 L653 736 Z" fill="#2a553f"/>
<g fill="#9a9a9e"><rect x="690" y="589" width="16" height="5"/><rect x="716" y="588" width="24" height="5"/><rect x="700" y="622" width="6" height="4"/><rect x="728" y="646" width="5" height="4"/></g>
<!-- picture -->
<path d="M778.800 595.800 L863.300 594 L863.300 678.600 L780 680 Z" fill="#89705a"/>
<path d="M789.400 606.400 L856.300 605 L856.300 661 L789.400 662 Z" fill="#cdd3dc"/>
<path d="M793 634.600 L852.700 633 L852.700 650.400 L793 651 Z" fill="#6a82bc"/>
<path d="M793 614 L852 612.500 L852 624 L793 625 Z" fill="#b7c3d6"/>
<path d="M786 662 L860 661 L860 674 L786 675 Z" fill="#77675a"/>

  </svg>
 </div>

 <!-- info panel -->
 <div class="abs" style="left:690px;top:276px;width:303px;height:449px;background:#0a0a0a;"></div>
 <div class="abs" style="left:691px;top:277px;width:301px;height:446px;background:#595959;"></div>
 <div class="abs" style="left:696px;top:282px;width:287px;height:178px;background:#404040;border-top:1px solid #4a4a4a;border-left:1px solid #4a4a4a;border-right:1px solid #6b6b6b;border-bottom:1px solid #6b6b6b;box-sizing:border-box;"></div>
 <div id="info" class="abs" style="left:700.5px;top:284px;font-family:'DejaVu Sans','Liberation Sans',sans-serif;font-size:10px;line-height:12px;color:#ececec;white-space:pre;letter-spacing:0.47px;">Kamera Model : DSC-HX100V
Dateiname : DSC08990.JPG
Aufnahme Datum : 2014:03:27 12:56:20
Copyright : 
Bild Beschreibung : 
Kommentar : 
Software : 
GPS-Version : 2.3
GPS-Latitude   : N 36°0'30.91"
GPS-Longitude: W 5°36'25.67"
GPS-High : 11.822m
GPS-MapDate : WGS-84
GPS-DateTime : 2014:03:27 11:56:21.296</div>

 <!-- nav buttons < > -->
 <div class="bbtn" style="left:711px;top:463px;width:25px;height:18px;font-size:9px;line-height:14px;">&lt;</div>
 <div class="bbtn" style="left:746px;top:463px;width:25px;height:18px;font-size:9px;line-height:14px;">&gt;</div>
 <!-- checkbox Info -->
 <div class="abs" style="left:795px;top:468px;width:11px;height:11px;box-sizing:border-box;border:1px solid #8e8f8f;background:linear-gradient(135deg,#dcdcdc,#ffffff);"></div>
 <svg class="abs" style="left:795px;top:468px" width="11" height="11" viewBox="0 0 11 11"><path d="M2.4 5.2 L4.6 8 L8.6 2.6" fill="none" stroke="#31439c" stroke-width="1.8"/></svg>
 <div class="abs wt" style="left:810px;top:468px;font-family:'DejaVu Sans Condensed','Liberation Sans',sans-serif;font-size:11px;line-height:13px;color:#f0f0f0;">Info</div>
 <!-- Speichern -->
 <div id="spbtn" class="abs" style="left:848px;top:463px;width:61px;height:23px;box-sizing:border-box;border:1px solid #a2a2a2;border-radius:3px;background:linear-gradient(#d2d2d2,#c4c4c4);box-shadow:inset 0 0 0 1px #e3e3e3;color:#8f8f8f;font-family:'DejaVu Sans Condensed','Liberation Sans',sans-serif;font-size:11px;line-height:20px;text-align:center;">Speichern</div>
 <!-- checkbox auto next -->
 <div class="abs" style="left:916px;top:468px;width:11px;height:11px;box-sizing:border-box;border:1px solid #8e8f8f;background:linear-gradient(135deg,#cfcfcf,#f6f6f6);"></div>
 <div class="abs wt" style="left:930.5px;top:468px;font-family:'DejaVu Sans Condensed','Liberation Sans',sans-serif;font-size:11px;line-height:13px;color:#f0f0f0;">auto next</div>

 <div class="lbl" style="left:696.5px;top:486px;">Kamera Name</div>
 <div class="inp" style="left:697px;top:501px;width:281px;">DSC-HX100V</div>
 <div class="lbl" style="left:696.5px;top:527px;">Bild Beschreibung</div>
 <div class="inp" style="left:697px;top:539px;width:281px;"></div>
 <div class="lbl" style="left:696.5px;top:565px;">Kommentar</div>
 <div class="inp" style="left:697px;top:577px;width:281px;"></div>

 <div class="lbl" style="left:696.5px;top:603px;">Latitude</div>
 <div class="lbl" style="left:816.5px;top:603px;">Longitude</div>
 <div class="lbl" style="left:931px;top:603px;">Attitude</div>
 <div class="inp" style="left:697px;top:615px;width:100px;">36.0085869444444</div>
 <div class="inp" style="left:817px;top:615px;width:100px;">-5.6071313888889</div>
 <div class="inp" style="left:931px;top:615px;width:48px;">11.822</div>

 <div class="lbl" style="left:699px;top:643px;">GPS Time</div>
 <div class="lbl" style="left:834.5px;top:643px;">KartenTyp</div>
 <div class="inp" style="left:699px;top:655px;width:123px;">25.10.2021 15:27:16</div>
 <div class="inp" style="left:835px;top:655px;width:143px;">openstreetmap</div>
 <svg class="abs" style="left:962px;top:661px" width="12" height="8" viewBox="0 0 12 8"><path d="M1.5 1.5 L10 1.5 L5.75 6 Z" fill="#f4f4f4"/></svg>

 <div class="bbtn" style="left:727px;top:690px;width:91px;height:23px;font-size:11px;line-height:16px;">Karte zentrieren</div>
 <div class="bbtn" style="left:860px;top:690px;width:110px;height:23px;font-size:11px;line-height:16px;">Daten übernehmen</div>

 <!-- status bar -->
 <div id="status">
  <span class="abs" style="left:1px;top:4px;letter-spacing:0.22px;" id="st1">Latitude: 36.00930809, Longitude: -5.60781777</span>
  <div class="abs" style="left:398px;top:1px;width:1px;height:18px;background:#737373;"></div>
  <span class="abs" style="left:403px;top:4px;letter-spacing:0.27px;" id="st2">Pin ver/setzen mit Klick rechte Maustaste !</span>
  <div class="abs" style="left:981px;top:1px;width:1px;height:18px;background:#737373;"></div>
  <svg class="abs" style="left:984px;top:5px" width="12" height="12" viewBox="0 0 12 12" fill="#1e1e1e">
   <rect x="8" y="1" width="1.4" height="1.4"/><rect x="5.5" y="3.5" width="1.4" height="1.4"/><rect x="8" y="3.5" width="1.4" height="1.4"/>
   <rect x="3" y="6" width="1.4" height="1.4"/><rect x="5.5" y="6" width="1.4" height="1.4"/><rect x="8" y="6" width="1.4" height="1.4"/>
   <rect x="0.5" y="8.5" width="1.4" height="1.4"/><rect x="3" y="8.5" width="1.4" height="1.4"/><rect x="5.5" y="8.5" width="1.4" height="1.4"/><rect x="8" y="8.5" width="1.4" height="1.4"/>
  </svg>
 </div>
 <!-- window edges -->
 <div class="abs" style="left:0;top:752px;width:1007px;height:3px;background:#575757;"></div>
 <div class="abs" style="left:0;top:755px;width:1010px;height:1px;background:#3a3a3a;"></div>
 <div class="abs" style="left:1007px;top:0;width:3px;height:756px;background:#2f2f33;"></div>
 <div class="abs" style="left:0;top:0;width:1007px;height:1px;background:#404040;"></div>
 <div class="abs" style="left:1px;top:1px;width:1006px;height:1px;background:#686868;"></div>
 <div class="abs" style="left:3px;top:27px;width:1001px;height:1px;background:#434343;"></div>
 <div class="abs" style="left:2px;top:28px;width:1px;height:704px;background:#444444;"></div>
</div>
</body>
</html>
